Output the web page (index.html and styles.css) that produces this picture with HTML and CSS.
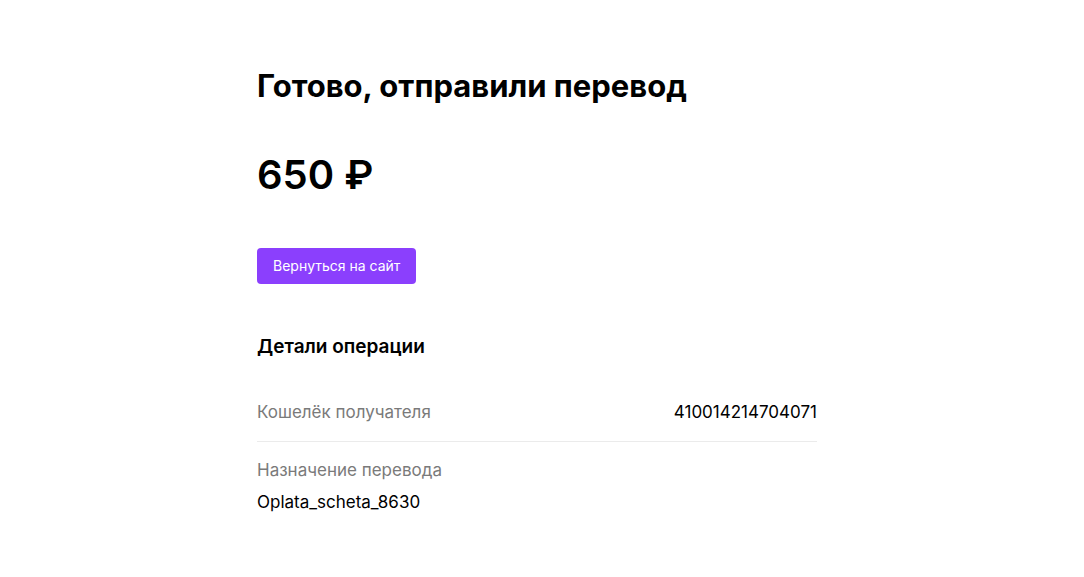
FILE: index.html
```html
<!DOCTYPE html>
<html lang="ru">
<head>
    <meta charset="UTF-8">
    <meta name="viewport" content="width=device-width, initial-scale=1.0">
    <title>Готово, отправили перевод</title>
    <link rel="stylesheet" href="styles.css">
</head>
<body>
    <div class="page">
        <h1 class="title">Готово, отправили перевод</h1>
        <div class="amount">650 ₽</div>
        <a class="back-button" href="#">Вернуться на сайт</a>

        <div class="details">
            <h2 class="details-title">Детали операции</h2>
            <div class="row row-inline">
                <span class="label">Кошелёк получателя</span>
                <span class="value">410014214704071</span>
            </div>
            <div class="row">
                <div class="label">Назначение перевода</div>
                <div class="value">Oplata_scheta_8630</div>
            </div>
        </div>
    </div>
</body>
</html>
```

FILE: styles.css
```css
body {
    margin: 0;
    background-color: #fff;
    color: #000;
    font-family: Inter, "Noto Sans", sans-serif;
}
.page {
    width: 570px;
    margin: 0 auto;
    padding-top: 64px;
}
.title {
    margin: 0;
    font-size: 31px;
    line-height: 44px;
    font-weight: 700;
}
.amount {
    margin-top: 39px;
    font-size: 40px;
    line-height: 56px;
    font-weight: 600;
}
.back-button {
    display: inline-block;
    margin-top: 45px;
    padding: 0 16px;
    height: 36px;
    line-height: 36px;
    background-color: #8b3ffd;
    color: #fff;
    font-size: 14px;
    border-radius: 4px;
    text-decoration: none;
}
.details {
    width: 560px;
    margin-top: 50px;
}
.details-title {
    margin: 0 0 40px;
    font-size: 19px;
    line-height: 26px;
    font-weight: 600;
}
.row {
    padding: 16px 0;
    font-size: 17px;
    line-height: 24px;
}
.row + .row {
    border-top: 1px solid #ebebeb;
}
.row-inline {
    display: flex;
    justify-content: space-between;
    padding-top: 0;
    padding-bottom: 17px;
}
.label {
    color: #7a7a7a;
}
.row .value {
    color: #000;
}
.row:not(.row-inline) .value {
    margin-top: 8px;
}
```
